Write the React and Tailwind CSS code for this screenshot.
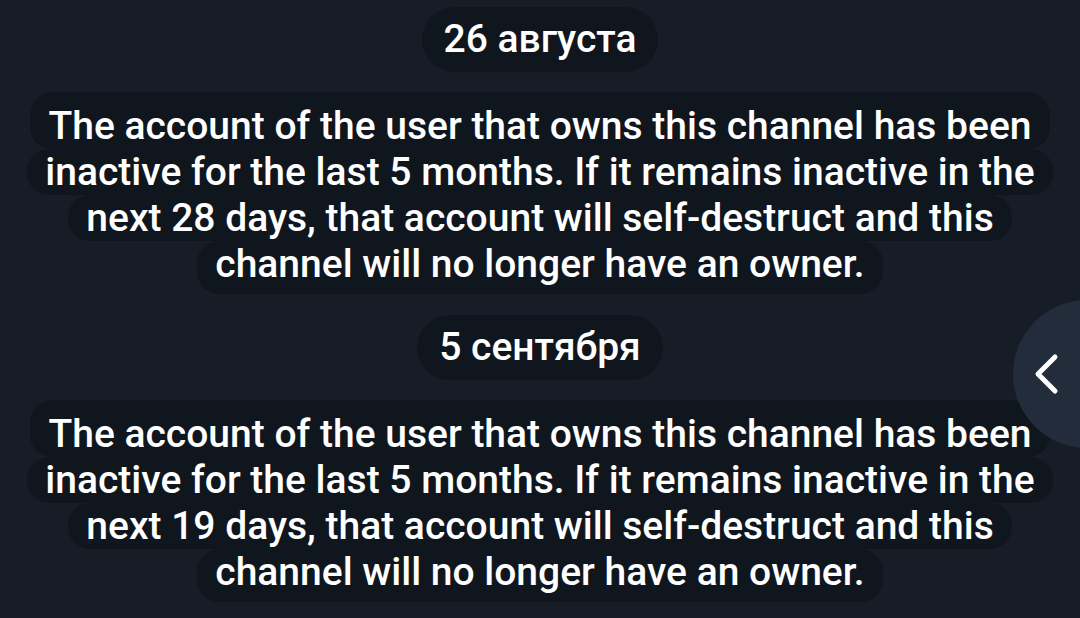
const messages = [
  {
    date: "26 августа",
    lines: [
      "The account of the user that owns this channel has been",
      "inactive for the last 5 months. If it remains inactive in the",
      "next 28 days, that account will self-destruct and this",
      "channel will no longer have an owner.",
    ],
  },
  {
    date: "5 сентября",
    lines: [
      "The account of the user that owns this channel has been",
      "inactive for the last 5 months. If it remains inactive in the",
      "next 19 days, that account will self-destruct and this",
      "channel will no longer have an owner.",
    ],
  },
];

function ServiceMessage({ lines }) {
  return (
    <div className="flex flex-col items-center">
      {lines.map((line, i) => (
        <div
          key={i}
          className="bg-[#10161e] rounded-[22px] px-[18px] leading-[46px] whitespace-nowrap first:pt-[11px] last:pb-[7px]"
        >
          {line}
        </div>
      ))}
    </div>
  );
}

export default function App() {
  return (
    <div
      className="relative w-full h-[618px] overflow-hidden bg-[#161d27] text-white text-[39px] font-medium"
      style={{ fontFamily: "Roboto, 'Noto Sans', sans-serif" }}
    >
      <div className="flex flex-col items-center pt-[7px]">
        {messages.map((m, i) => (
          <div key={i} className="flex flex-col items-center">
            <div className={`h-[65px] px-[22px] rounded-full bg-[#10161e] flex items-center ${i > 0 ? "mt-[21px]" : ""}`}>
              {m.date}
            </div>
            <div className="mt-[20px]">
              <ServiceMessage lines={m.lines} />
            </div>
          </div>
        ))}
      </div>

      {/* side button */}
      <div className="absolute left-[1013px] top-[300px] w-[148px] h-[148px] rounded-full bg-[#232c3a] flex items-center pl-[18px]">
        <svg width="30" height="42" viewBox="0 0 30 42" fill="none">
          <polyline
            points="24,4 7,21 24,38"
            stroke="white"
            strokeWidth="5"
            strokeLinecap="round"
            strokeLinejoin="round"
          />
        </svg>
      </div>
    </div>
  );
}
